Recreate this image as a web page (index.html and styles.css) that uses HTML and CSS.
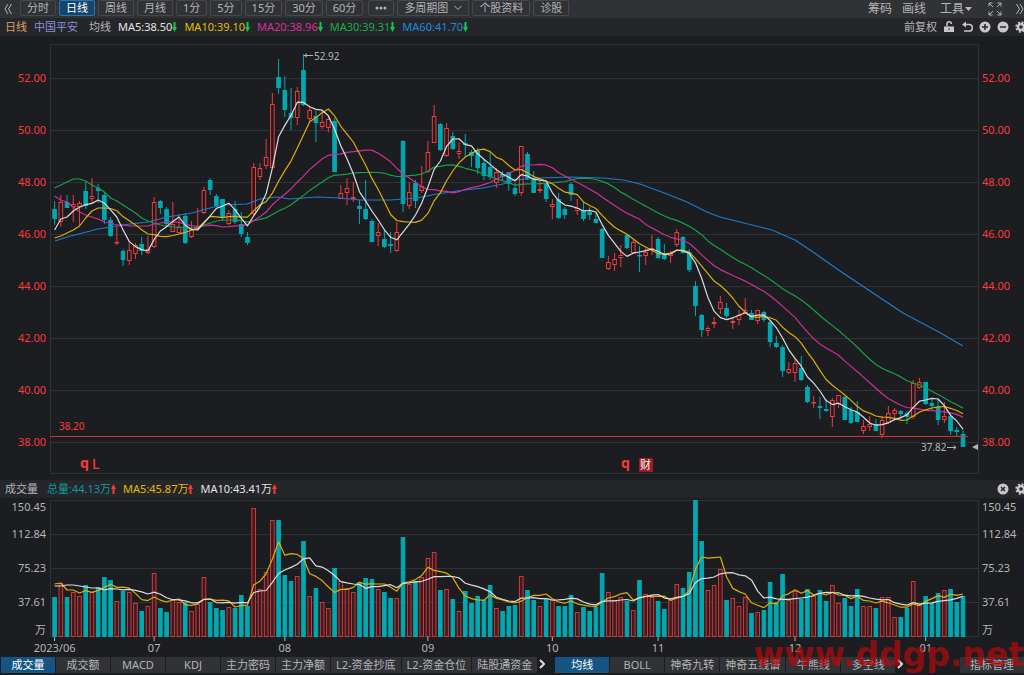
FILE: index.html
```html
<!DOCTYPE html>
<html lang="zh-CN">
<head>
<meta charset="UTF-8">
<meta name="viewport" content="width=device-width, initial-scale=1.0">
<title>中国平安 日线</title>
<link rel="stylesheet" href="styles.css">
</head>
<body>
	<!-- Period toolbar -->
	<header class="toolbar">
		<button class="icon-button" aria-label="收起">
			<svg width="8" height="12" viewBox="0 0 8 12"><path d="M4 1L1 6l3 5M7.5 1l-3 5 3 5" /></svg>
		</button>
		<nav class="periods">
			<button>分时</button>
			<button class="active">日线</button>
			<button>周线</button>
			<button>月线</button>
			<button>1分</button>
			<button>5分</button>
			<button>15分</button>
			<button>30分</button>
			<button>60分</button>
			<button class="more" aria-label="更多"><svg class="dots" width="12" height="4" viewBox="0 0 12 4"><circle cx="2" cy="2" r="1.5" /><circle cx="6" cy="2" r="1.5" /><circle cx="10" cy="2" r="1.5" /></svg></button>
			<button>多周期图<svg class="chevron" width="8" height="6" viewBox="0 0 8 6"><path d="M.5 1L4 4.5 7.5 1" /></svg></button>
			<button>个股资料</button>
			<button>诊股</button>
		</nav>
		<div class="tools">
			<button>筹码</button>
			<button>画线</button>
			<button class="menu">工具<svg class="caret" width="7" height="4" viewBox="0 0 7 4"><path d="M0 0h7L3.5 4z" /></svg></button>
			<button class="fullscreen" aria-label="全屏"><svg width="14" height="14" viewBox="0 0 14 14"><path d="M1 4.5V1h3.5M1 1l4 4M9.5 1H13v3.5M13 1L9 5M1 9.5V13h3.5M1 13l4-4M13 9.5V13H9.5M13 13L9 9" /></svg></button>
			<button class="expand" aria-label="展开"><svg width="8" height="12" viewBox="0 0 8 12"><path d="M.5 1l3 5-3 5M4 1l3 5-3 5" /></svg></button>
		</div>
	</header>

	<!-- Moving averages of the price -->
	<section class="info-bar">
		<span class="period-name">日线</span>
		<span class="stock-name">中国平安</span>
		<span>均线</span>
		<span class="white">MA5:38.50<svg class="arrow" viewBox="0 0 5 10"><path d="M1.5 0h2v5H5L2.5 10 0 5h1.5z" /></svg></span>
		<span class="yellow">MA10:39.10<svg class="arrow" viewBox="0 0 5 10"><path d="M1.5 0h2v5H5L2.5 10 0 5h1.5z" /></svg></span>
		<span class="pink">MA20:38.96<svg class="arrow" viewBox="0 0 5 10"><path d="M1.5 0h2v5H5L2.5 10 0 5h1.5z" /></svg></span>
		<span class="green">MA30:39.31<svg class="arrow" viewBox="0 0 5 10"><path d="M1.5 0h2v5H5L2.5 10 0 5h1.5z" /></svg></span>
		<span class="blue">MA60:41.70<svg class="arrow" viewBox="0 0 5 10"><path d="M1.5 0h2v5H5L2.5 10 0 5h1.5z" /></svg></span>
		<div class="info-tools">
			<button>前复权</button>
			<button aria-label="锁定"><svg width="12" height="12" viewBox="0 0 12 12"><path class="solid" d="M1 5.5h10V11H1z" /><path class="thick" d="M4 5.5V3a2.2 2.2 0 0 1 4.4 0" /><path class="hole" d="M5.5 7.2h1v2h-1z" /></svg></button>
			<button aria-label="撤销"><svg width="12" height="12" viewBox="0 0 12 12"><path class="solid" d="M1 3.5L5 .5v6z" /><path class="thick" d="M4 3.5h4a3.3 3.3 0 0 1 0 6.6H3" /></svg></button>
			<button aria-label="放大"><svg width="12" height="12" viewBox="0 0 12 12"><circle class="solid" cx="6" cy="6" r="5.5" /><path class="mark" d="M6 3v6M3 6h6" /></svg></button>
			<button aria-label="缩小"><svg width="12" height="12" viewBox="0 0 12 12"><circle class="solid" cx="6" cy="6" r="5.5" /><path class="mark" d="M3 6h6" /></svg></button>
			<button aria-label="设置"><svg width="12" height="12" viewBox="0 0 12 12"><circle class="gear-teeth" cx="6" cy="6" r="4.7" /><circle class="gear-ring" cx="6" cy="6" r="3" /></svg></button>
		</div>
	</section>

	<svg id="price-chart" class="chart" viewBox="0 36 1024 444"></svg>

	<!-- Volume header -->
	<section class="info-bar">
		<span class="volume-name">成交量</span>
		<span class="teal">总量:44.13万<svg class="arrow up" viewBox="0 0 5 10"><path d="M1.5 10h2V5H5L2.5 0 0 5h1.5z" /></svg></span>
		<span class="yellow">MA5:45.87万<svg class="arrow up" viewBox="0 0 5 10"><path d="M1.5 10h2V5H5L2.5 0 0 5h1.5z" /></svg></span>
		<span class="white">MA10:43.41万<svg class="arrow up" viewBox="0 0 5 10"><path d="M1.5 10h2V5H5L2.5 0 0 5h1.5z" /></svg></span>
		<div class="info-tools">
			<button aria-label="关闭"><svg width="12" height="12" viewBox="0 0 12 12"><circle class="solid" cx="6" cy="6" r="5.5" /><path class="mark" d="M4 4l4 4M8 4l-4 4" /></svg></button>
			<button aria-label="设置"><svg width="12" height="12" viewBox="0 0 12 12"><circle class="gear-teeth" cx="6" cy="6" r="4.7" /><circle class="gear-ring" cx="6" cy="6" r="3" /></svg></button>
		</div>
	</section>

	<svg id="volume-chart" class="chart" viewBox="0 498 1024 158"></svg>

	<!-- Indicator tabs -->
	<footer class="indicators">
		<nav class="tabs">
			<button class="active">成交量</button>
			<button>成交额</button>
			<button>MACD</button>
			<button>KDJ</button>
			<button>主力密码</button>
			<button>主力净额</button>
			<button>L2-资金抄底</button>
			<button>L2-资金仓位</button>
			<button>陆股通资金</button>
		</nav>
		<button class="next" aria-label="更多副图指标"><svg width="6" height="10" viewBox="0 0 6 10"><path d="M1 1l4 4-4 4" /></svg></button>
		<nav class="tabs">
			<button class="active">均线</button>
			<button>BOLL</button>
			<button>神奇九转</button>
			<button>神奇五线谱</button>
			<button>牛熊线</button>
			<button>多空线</button>
		</nav>
		<button class="next" aria-label="更多主图指标"><svg width="6" height="10" viewBox="0 0 6 10"><path d="M1 1l4 4-4 4" /></svg></button>
		<button class="manage">指标管理</button>
		<div class="watermark">www.ddgp.net</div>
	</footer>

	<script src="script.js"></script>
</body>
</html>
```

FILE: styles.css
```css
body {
	margin: 0;
	background-color: #1c1d20;
	color: #b4b5b8;
	font-family: "Noto Sans", "Noto Sans CJK SC", sans-serif;
	font-size: 11px;
	line-height: 16px;
	overflow-x: hidden;
}

button {
	margin: 0;
	padding: 0;
	border: none;
	background: none;
	color: inherit;
	font: inherit;
	white-space: nowrap;
	cursor: pointer;
}

svg {
	fill: none;
	stroke: #b4b5b8;
}

/* Period toolbar */
.toolbar {
	display: flex;
	height: 18px;
	background-color: #303236;
	overflow: hidden;
}

.icon-button {
	display: flex;
	align-items: center;
	width: 20px;
	padding-left: 4px;
}

.periods {
	display: flex;
	gap: 3px;
}

.periods button {
	display: flex;
	align-items: center;
	height: 16px;
	padding: 0 6px;
	border: 1px solid #45474b;
	border-radius: 2px;
	line-height: 14px;
}

.periods .more {
	margin-left: 2px;
	padding: 0 6px;
}

.periods .active {
	background-color: #174467;
	border-color: #1d78b8;
	color: #fff;
}

.dots {
	fill: #b4b5b8;
	stroke: none;
}

.chevron {
	margin-left: 6px;
}

.tools {
	display: flex;
	gap: 10px;
	margin-left: auto;
	font-size: 12px;
}

.tools button {
	display: flex;
	align-items: center;
}

.tools .menu {
	margin-left: 4px;
}

.tools .fullscreen {
	margin-left: 6px;
}

.tools .expand {
	margin-left: 4px;
}

.tools .caret {
	margin-left: 1px;
	fill: #b4b5b8;
	stroke: none;
}

/* Indicator values over each chart */
.info-bar {
	display: flex;
	gap: 7px;
	align-items: center;
	height: 18px;
	padding-left: 5px;
	background-color: #25262a;
	white-space: nowrap;
	overflow: hidden;
}

.stock-name {
	margin-right: 4px;
	color: #8b8fdc;
}

.volume-name {
	margin-right: 2px;
}

.period-name {
	color: #dba36a;
}

.white {
	color: #e3e3e3;
}

.yellow {
	color: #e5bd00;
}

.pink {
	color: #d8309b;
}

.green {
	color: #18ad4b;
}

.blue {
	color: #2088da;
}

.teal {
	color: #10999f;
}

.arrow {
	width: 5px;
	height: 10px;
	vertical-align: -1px;
	fill: #12c94f;
	stroke: none;
}

.arrow.up {
	fill: #fa3838;
}

.info-tools {
	display: flex;
	gap: 6px;
	align-items: center;
	margin-left: auto;
	margin-right: -3px;
}

.info-tools svg {
	display: block;
}

.solid {
	fill: #c8c8ca;
	stroke: none;
}

.thick {
	stroke: #c8c8ca;
	stroke-width: 1.5;
}

.mark {
	stroke: #25262a;
	stroke-width: 1.5;
}

.hole {
	fill: #25262a;
	stroke: none;
}

.gear-teeth {
	stroke: #c8c8ca;
	stroke-width: 2;
	stroke-dasharray: 1.9 1.8;
}

.gear-ring {
	stroke: #c8c8ca;
	stroke-width: 2.4;
}

/* Charts */
.chart {
	display: block;
	width: 100%;
}

.chart text {
	fill: #b4b5b8;
	stroke: none;
	font-size: 11px;
}

.chart .price {
	fill: #f93b3b;
}

.chart .small {
	font-size: 10px;
}

.chart .price-tag {
	fill: #f93b3b;
	font-size: 10px;
}

.chart .flag {
	fill: #f93b3b;
	font-size: 14px;
	font-weight: bold;
}

.chart .flag.light {
	font-weight: 500;
}

.chart .badge-text {
	fill: #fff;
}

.badge {
	fill: #9b1c22;
	stroke: none;
}

.end {
	text-anchor: end;
}

.middle {
	text-anchor: middle;
}

.grid {
	stroke: #303236;
}

.up-bar {
	fill: #1c1d20;
	stroke: #ef3b3b;
}

.down-bar {
	fill: #00a9b2;
	stroke: #00a9b2;
}

.volume.up-bar {
	fill: #331e23;
	stroke: #dc3537;
}

.last-line {
	stroke: #d82f34;
}

.marker {
	fill: #b4b5b8;
	stroke: none;
}

.line {
	stroke-width: 1.2;
	stroke-linejoin: round;
}

.line.white {
	stroke: #dcdcdc;
}

.line.yellow {
	stroke: #dcae0b;
}

.line.pink {
	stroke: #cf2f98;
}

.line.green {
	stroke: #17a048;
}

.line.blue {
	stroke: #1d7ccb;
}

/* Indicator tabs */
.indicators {
	position: relative;
	display: flex;
	height: 18px;
	padding: 1px 0 0 1px;
}

.tabs {
	display: flex;
	gap: 1px;
}

.tabs button, .manage {
	min-width: 54px;
	height: 16px;
	padding: 0 5px;
	background-color: #303236;
	line-height: 16px;
}

.tabs .active {
	background-color: #165583;
	color: #fff;
}

.next {
	width: 18px;
	height: 16px;
	text-align: left;
	padding-left: 2px;
}

.next svg {
	stroke: #dcdcdc;
	stroke-width: 2;
}

.manage {
	width: 64px;
	margin-left: auto;
}

.watermark {
	position: absolute;
	right: 0;
	bottom: 1px;
	color: rgba(190, 8, 12, 0.68);
	font-family: "DejaVu Sans", sans-serif;
	font-size: 33px;
	font-weight: bold;
	line-height: 38px;
	pointer-events: none;
}
```

FILE: script.js
```javascript
// One row per day: type (r = rise, f = fall), high, body top, body bottom, low, volume top
var days = `f 201 209 219 225 597|r 195 202 222 227 583|f 195 202 208 208 597|r 195 204 207 222 592|r 201 203 207 226 596
f 182 191 206 209 585|r 178 196 199 203 592|f 184 188 191 203 587|f 193 195 220 224 577|f 217 220 236 237 580
r 227 242 243 245 601|f 249 251 260 266 591|r 242 250 261 265 592|r 243 245 254 259 603|f 237 244 251 255 611
r 236 249 253 254 606|r 197 202 247 248 573|f 200 201 208 214 608|f 207 209 224 227 612|r 202 224 232 232 600
r 214 227 233 233 602|f 213 216 243 244 602|r 221 229 237 238 611|r 208 227 229 230 604|r 187 190 213 214 577
f 178 180 190 195 602|f 194 196 206 207 608|f 199 199 217 221 610|r 210 213 224 225 607|f 201 209 222 224 608
f 212 224 234 237 595|f 232 237 243 245 606|r 163 167 214 215 508|r 163 168 177 180 589|r 139 157 166 169 572
r 93 104 168 168 520|f 59 77 88 94 520|f 76 90 110 117 575|f 88 113 118 130 581|r 87 91 118 125 576
f 54 70 105 106 541|r 107 110 119 122 596|f 111 116 123 142 588|r 111 122 127 129 602|r 116 119 128 132 608
f 118 121 172 172 568|r 185 193 199 199 581|r 178 188 193 205 588|r 182 197 199 202 592|f 200 206 209 224 582
f 180 209 219 220 578|f 219 221 242 242 579|r 223 232 236 246 589|f 230 239 247 248 592|f 232 244 246 253 598
r 222 232 251 252 598|f 140 141 204 212 537|r 182 192 206 209 584|f 180 183 201 208 581|r 166 186 191 193 577
r 141 152 172 173 558|r 105 116 143 143 552|f 123 124 150 151 590|r 123 128 156 157 589|f 132 136 149 150 599
r 142 151 154 159 611|f 134 143 145 156 591|f 150 152 156 167 603|f 148 151 168 174 596|f 160 163 176 180 600
f 152 167 177 180 585|r 168 172 183 188 608|f 171 174 177 180 611|f 172 172 184 191 606|f 183 188 194 196 605
r 146 146 193 196 576|f 152 154 179 180 590|f 171 178 193 193 600|r 180 189 191 193 606|f 183 184 199 202 598
r 199 204 207 219 600|f 193 199 218 219 606|f 207 209 215 219 606|f 182 184 195 201 595|r 199 208 211 215 612
f 202 210 219 221 607|f 207 212 215 220 611|f 212 219 223 223 607|f 228 229 258 258 573|r 256 262 269 270 592
r 253 259 265 271 600|r 245 255 258 267 597|f 234 235 248 249 601|r 240 242 253 254 610|f 246 255 256 272 580
r 248 252 256 265 594|r 235 248 250 255 597|f 237 239 258 259 601|f 244 254 259 260 609|r 251 253 256 263 600
r 229 232 245 247 584|f 236 237 253 254 588|f 249 252 270 272 572|f 281 286 306 316 500|f 314 315 330 337 541
r 326 328 331 336 590|r 317 322 324 328 585|r 296 302 309 314 569|f 303 308 316 318 600|r 317 321 323 329 598
r 310 315 320 325 606|r 298 310 313 314 597|f 310 313 320 320 613|r 310 310 321 324 612|f 311 312 320 322 610
f 320 322 342 347 582|f 336 343 347 348 602|f 345 347 371 377 574|r 362 369 373 374 600|r 359 363 373 382 591
f 356 368 380 381 599|f 385 387 402 403 589|r 396 402 403 408 596|f 397 406 408 419 590|f 399 409 411 412 601
r 398 400 417 427 585|r 395 395 404 408 603|f 396 397 420 420 598|f 407 410 423 424 606|f 401 412 422 422 589
r 420 426 431 434 606|r 416 424 427 431 606|f 419 424 431 431 608|r 416 420 435 438 597|r 406 413 423 424 597
r 408 410 414 419 617|f 410 411 414 419 617|f 411 413 417 424 608|r 380 383 417 419 581|r 378 382 388 389 605
f 382 382 404 405 596|f 398 403 406 410 603|f 398 407 420 425 593|r 402 416 420 423 590|f 413 416 431 435 589
f 427 430 432 437 602|f 430 434 447 447 596`.split(/[|\n]/).map(function(row) {
	var v = row.split(" ");
	return { type: v[0], high: +v[1], top: +v[2], bottom: +v[3], low: +v[4], volume: +v[5] };
});

var NS = "http://www.w3.org/2000/svg";
var price = document.getElementById("price-chart");
var volume = document.getElementById("volume-chart");

function add(parent, name, attrs, text) {
	var el = document.createElementNS(NS, name);
	for (var key in attrs) {
		el.setAttribute(key, attrs[key]);
	}
	if (text) {
		el.textContent = text;
	}
	parent.appendChild(el);
}

function path(parent, cls, d) {
	add(parent, "path", { "class": cls, d: d });
}

function label(parent, cls, x, y, text) {
	add(parent, "text", { "class": cls, x: x, y: y }, text);
}

function dayX(i) {
	return 54.6 + i * 6.222;
}

// Moving average; the first values come from days before the chart starts
function average(values, count, first) {
	return values.map(function(v, i) {
		if (i < first.length) {
			return first[i];
		}
		var sum = 0;
		for (var k = i - count + 1; k <= i; k++) {
			sum += values[k];
		}
		return sum / count;
	});
}

function drawLine(parent, cls, values) {
	path(parent, cls, "M" + values.map(function(y, i) {
		return dayX(i).toFixed(1) + " " + y.toFixed(1);
	}).join("L"));
}

// Grid and price scale
path(price, "grid", "M50.5 44.5H978.5V473.5H50.5z");
[52, 50, 48, 46, 44, 42, 40, 38].forEach(function(value, i) {
	var y = Math.round(78 + i * 51.93);
	path(price, "grid", "M50 " + (y + 0.5) + "H978");
	label(price, "price end", 46, y + 4, value + ".00");
	label(price, "price", 982, y + 4, value + ".00");
});

path(volume, "grid", "M50.5 500.5H978.5V636.5H50.5z");
[["150.45", 511], ["112.84", 538], ["75.23", 572], ["37.61", 606], ["万", 634]].forEach(function(row, i) {
	if (i > 0 && i < 4) {
		path(volume, "grid", "M50 " + (row[1] - 3.5) + "H978");
	}
	label(volume, "end", 46, row[1], row[0]);
	label(volume, "", 982, row[1], row[0]);
});

// Candles and volume bars
days.forEach(function(day, i) {
	var x = dayX(i);
	var cls = day.type === "r" ? "up-bar" : "down-bar";
	path(price, cls, "M" + x + " " + day.high + "V" + day.top + "M" + x + " " + day.bottom + "V" + day.low);
	add(price, "rect", { "class": cls, x: x - 1.8, y: day.top + 0.5, width: 3.6, height: Math.max(day.bottom - day.top - 1, 0.5) });
	add(volume, "rect", { "class": cls + " volume", x: x - 1.8, y: day.volume + 0.5, width: 3.6, height: 636 - day.volume });
});

var closes = days.map(function(day) {
	return day.type === "r" ? day.top : day.bottom;
});
var volumes = days.map(function(day) {
	return day.volume;
});

path(price, "line blue", "M55 241L67 237 98 229 130 224 148 222 167 217 192 213 210 208 223 205 247 204 260 199 277 197 290 199 317 197 340 198 360 200 390 200 417 198 437 194 457 191 483 188 503 184 513 180 540 178 570 177 603 178 623 180 640 184 667 194 687 202 707 212 720 217 740 222 772 230 795 240 813 252 840 271 873 293 903 313 937 331 963 346");
drawLine(price, "line green", average(closes, 30, [188, 185, 182, 179, 179, 181, 185, 188, 192, 198, 201, 205, 209, 213, 218, 221, 223, 225, 226, 227, 227, 228, 228, 227, 225, 223, 221, 220, 220]));
drawLine(price, "line pink", average(closes, 20, [196, 200, 202, 207, 212, 215, 217, 219, 222, 223, 225, 225, 226, 226, 226, 226, 224, 223, 222]));
drawLine(price, "line yellow", average(closes, 10, [238, 236, 233, 230, 226, 218, 211, 208, 208]));
drawLine(price, "line white", average(closes, 5, [230, 219, 217, 211]));
drawLine(volume, "line yellow", average(volumes, 5, [584, 583, 590, 590]));
drawLine(volume, "line white", average(volumes, 10, [586, 586, 585, 585, 586, 587, 588, 588, 590]));

// Last price, highest and lowest
path(price, "last-line", "M50 436.5H968");
label(price, "price-tag", 59, 430, "38.20");
path(price, "", "M304 55.5H313M307 53.5L304.5 55.5 307 57.5");
label(price, "small", 314, 60, "52.92");
label(price, "small", 921, 451, "37.82");
path(price, "", "M947 447.5H956M953.5 445.5L956 447.5 953.5 449.5");
path(price, "marker", "M972 447L978 444V450z");

// Event flags
label(price, "flag", 80, 468, "q");
label(price, "flag light", 92, 469, "L");
label(price, "flag", 621, 468, "q");
add(price, "rect", { "class": "badge", x: 639, y: 458, width: 14, height: 14 });
label(price, "badge-text", 640, 469, "财");

// Month labels
[[0, "2023/06"], [16, "07"], [37, "08"], [60, "09"], [80, "10"], [97, "11"], [119, "12"], [140, "01"]].forEach(function(month) {
	var x = dayX(month[0]);
	path(volume, "", "M" + x + " 637V641");
	label(volume, "middle", x, 652, month[1]);
});
```
